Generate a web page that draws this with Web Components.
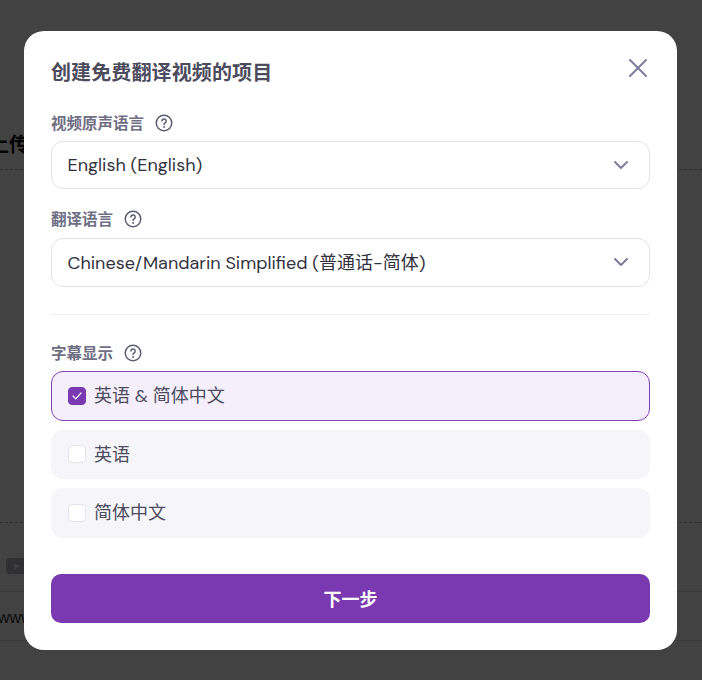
<!DOCTYPE html>
<html lang="zh-CN"><head><meta charset="utf-8"><title>创建免费翻译视频的项目</title>
<style>
html,body{margin:0;padding:0;height:680px;overflow:hidden;background:#fff;font-family:"Open Sans","Noto Sans CJK SC",sans-serif}
</style></head><body>
<bg-page></bg-page>
<modal-overlay>
  <modal-head>创建免费翻译视频的项目</modal-head>
  <field-label style="--mt:24.5px">视频原声语言</field-label>
  <select-box style="--mt:6.5px">English (English)</select-box>
  <field-label style="--mt:17.5px">翻译语言</field-label>
  <select-box style="--mt:7.5px;--tmt:-2px">Chinese/Mandarin Simplified (普通话-简体)</select-box>
  <h-rule></h-rule>
  <field-label style="--mt:26px">字幕显示</field-label>
  <check-option checked style="--mt:6.5px">英语 &amp; 简体中文</check-option>
  <check-option style="--mt:9px">英语</check-option>
  <check-option style="--mt:9px">简体中文</check-option>
  <next-button>下一步</next-button>
</modal-overlay>
<script>
const FONT='"DM Sans","Inter","Noto Sans CJK SC",sans-serif';
function def(name,html){
  customElements.define(name,class extends HTMLElement{
    constructor(){super();this.attachShadow({mode:'open'}).innerHTML=html;}
  });
}
def('bg-page',`<style>
:host{display:block;height:680px;box-sizing:border-box;overflow:hidden;color:#111;font-family:"Noto Sans CJK SC",sans-serif}
.title{margin:130px 0 0 -11px;font-size:20px;font-weight:700;line-height:28px;white-space:nowrap}
.dash{border-top:1px dashed #bbb}
.d1{margin-top:11px}.d2{margin-top:352px}
.yt{margin:35px 0 0 6px;width:22px;height:16px;border-radius:4px;background:#b8b8c4;display:flex;align-items:center;justify-content:center}
.url{margin-top:17px;border-top:1px solid #d9d9d9;border-bottom:1px solid #d9d9d9;height:48px;font:16px/52px "Liberation Sans",sans-serif;color:#333;margin-left:-2px;white-space:nowrap}
</style>
<div class="title">上传视频</div><div class="dash d1"></div><div class="dash d2"></div>
<div class="yt"><svg width="6" height="7" viewBox="0 0 6 7"><path d="M0 0l6 3.500L0 7z" fill="#eee"/></svg></div>
<div class="url">www.youtube.com</div>`);
def('modal-overlay',`<style>
:host{position:fixed;inset:0;display:flex;align-items:center;justify-content:center;padding-right:1px;background:rgba(0,0,0,.74)}
.m{width:653px;height:619px;box-sizing:border-box;padding:27px 27px;background:#fff;border-radius:20px;display:flex;flex-direction:column}
</style><div class="m"><slot></slot></div>`);
def('modal-head',`<style>
:host{display:flex;justify-content:space-between;align-items:flex-start;height:28px;font-family:"Noto Sans CJK SC",sans-serif;font-size:20px;font-weight:700;letter-spacing:.12px;line-height:28px;color:#4c4c5e}
svg{display:block;margin:.5px 2px 0 0}
</style><span><slot></slot></span>
<svg width="20" height="20" viewBox="0 0 20 20" fill="none" stroke="#7f7c9b" stroke-width="2" stroke-linecap="round"><path d="M2 2l16 16M18 2L2 18"/></svg>`);
def('field-label',`<style>
:host{display:flex;align-items:center;gap:10.500px;height:24px;margin-top:var(--mt,0);font-family:"Noto Sans CJK SC",sans-serif;font-size:15.500px;font-weight:700;line-height:24px;color:#6f6e84}
span{margin-top:-1px}
svg{display:block;margin-top:1.500px}
</style><span><slot></slot></span>
<svg width="18" height="18" viewBox="0 0 18 18" fill="none" stroke="#5d5d72" stroke-width="1.500" stroke-linecap="round"><circle cx="9" cy="9" r="7.750"/><path d="M6.900 7.100a2.150 2.150 0 1 1 3.300 1.800c-.8.500-1.200.9-1.200 1.600"/><circle cx="9" cy="13" r=".5" fill="#5d5d72" stroke-width=".8"/></svg>`);
def('select-box',`<style>
:host{display:flex;align-items:center;justify-content:space-between;box-sizing:border-box;height:48.500px;margin-top:var(--mt,0);padding:0 20px 0 15.500px;border:1px solid #e2e2ea;border-radius:12px;background:#fff;font-family:${FONT};font-size:18px;color:#333340;white-space:nowrap}
span{margin-top:var(--tmt,0)}
svg{display:block}
</style><span><slot></slot></span>
<svg width="16" height="10" viewBox="0 0 16 10" fill="none" stroke="#7f7c9b" stroke-width="2" stroke-linecap="round" stroke-linejoin="round"><path d="M2 2l6 6 6-6"/></svg>`);
def('h-rule',`<style>:host{display:block;height:1px;margin-top:27px;background:#eeeef2}</style>`);
def('check-option',`<style>
:host{display:flex;align-items:center;gap:8px;box-sizing:border-box;height:49.500px;margin-top:var(--mt,0);padding:0 17px;border-radius:12px;background:#f5f5fa;font-family:${FONT};font-size:18px;color:#4c4c5e;white-space:nowrap}
:host([checked]){background:#f4effb;border:1px solid #7f42b5;padding:0 16px}
.t{margin-top:-2px}
.b{width:18px;height:18px;box-sizing:border-box;border-radius:4px;background:#fff;border:1px solid #e4e4ec;display:flex;align-items:center;justify-content:center;flex:none}
:host([checked]) .b{background:#7a39b0;border-color:#7a39b0}
svg{display:none}
:host([checked]) svg{display:block}
</style><span class="b"><svg width="10" height="8" viewBox="0 0 10 8" fill="none" stroke="#fff" stroke-width="1.200" stroke-linecap="round" stroke-linejoin="round"><path d="M1 4l2.800 2.800L9 1"/></svg></span><span class="t"><slot></slot></span>`);
def('next-button',`<style>
:host{display:flex;align-items:center;justify-content:center;height:49px;margin-top:36px;border-radius:10px;background:#7a39b0;color:#fff;font-family:"Noto Sans CJK SC",sans-serif;font-size:18px;font-weight:700}
</style><slot></slot>`);
</script>
</body></html>
